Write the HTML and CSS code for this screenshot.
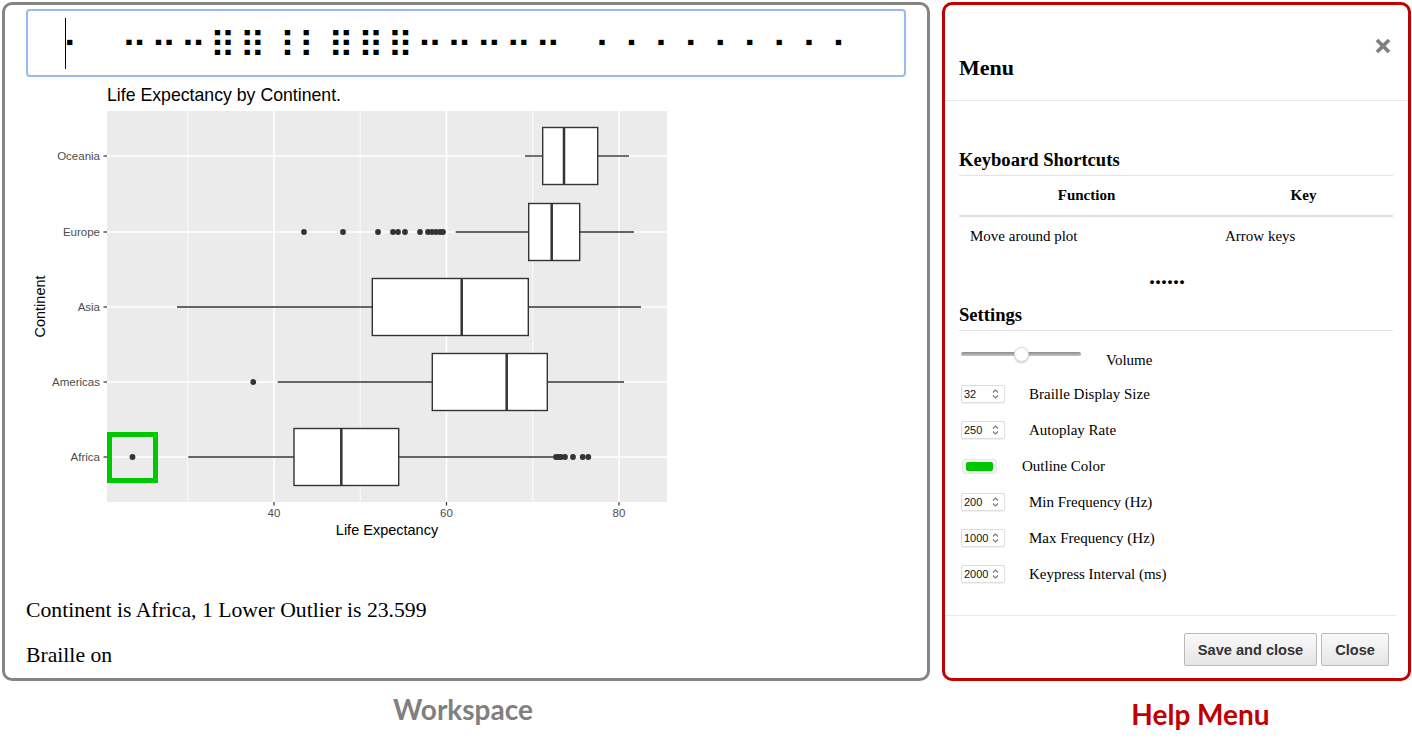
FILE: index.html
```html
<!DOCTYPE html>
<html lang="en">
<head>
    <meta charset="UTF-8">
    <meta name="viewport" content="width=device-width, initial-scale=1.0">
    <title>Workspace and Help Menu</title>

    <link rel="stylesheet" href="styles.css">
</head>
<body>
    <div class="page">
        <div class="col col-workspace">
            <div class="workspace">
                <div class="braille" aria-label="Braille display">
                    <span class="caret"></span><span class="braille-text">⠂⠀⠒⠒⠒⠿⠿⠸⠇⠿⠿⠿⠒⠒⠒⠒⠒⠀⠂⠂⠂⠂⠂⠂⠂⠂⠂</span>
                </div>

                <svg class="plot" width="660" height="470" viewBox="20 80 660 470">
                    <text class="plot-title" x="107" y="101">Life Expectancy by Continent.</text>
                    <rect x="107" y="111" width="560" height="391" fill="#ebebeb"/>

                    <!-- grid -->
                    <g class="grid-minor">
                        <line x1="187.75" y1="111" x2="187.75" y2="502"/>
                        <line x1="360.25" y1="111" x2="360.25" y2="502"/>
                        <line x1="532.75" y1="111" x2="532.75" y2="502"/>
                    </g>
                    <g class="grid-major">
                        <line x1="274" y1="111" x2="274" y2="502"/>
                        <line x1="446.5" y1="111" x2="446.5" y2="502"/>
                        <line x1="619" y1="111" x2="619" y2="502"/>
                        <line x1="107" y1="156" x2="667" y2="156"/>
                        <line x1="107" y1="232" x2="667" y2="232"/>
                        <line x1="107" y1="307" x2="667" y2="307"/>
                        <line x1="107" y1="382" x2="667" y2="382"/>
                        <line x1="107" y1="457" x2="667" y2="457"/>
                    </g>

                    <!-- Oceania -->
                    <g class="box">
                        <line x1="525" y1="156" x2="542.7" y2="156"/>
                        <line x1="597.7" y1="156" x2="629" y2="156"/>
                        <rect x="542.7" y="127.5" width="55" height="57"/>
                        <line class="median" x1="564" y1="127.5" x2="564" y2="184.5"/>
                    </g>
                    <!-- Europe -->
                    <g class="box">
                        <line x1="455.7" y1="232" x2="528.7" y2="232"/>
                        <line x1="579.7" y1="232" x2="634" y2="232"/>
                        <rect x="528.7" y="203.5" width="51" height="57"/>
                        <line class="median" x1="551.7" y1="203.5" x2="551.7" y2="260.5"/>
                    </g>
                    <g class="outliers">
                        <circle cx="304" cy="232" r="2.9"/>
                        <circle cx="343" cy="232" r="2.9"/>
                        <circle cx="378" cy="232" r="2.9"/>
                        <circle cx="393" cy="232" r="2.9"/>
                        <circle cx="398" cy="232" r="2.9"/>
                        <circle cx="405" cy="232" r="2.9"/>
                        <circle cx="420" cy="232" r="2.9"/>
                        <circle cx="428" cy="232" r="2.9"/>
                        <circle cx="432" cy="232" r="2.9"/>
                        <circle cx="436" cy="232" r="2.9"/>
                        <circle cx="440" cy="232" r="2.9"/>
                        <circle cx="443" cy="232" r="2.9"/>
                    </g>
                    <!-- Asia -->
                    <g class="box">
                        <line x1="177" y1="307" x2="372.3" y2="307"/>
                        <line x1="528.3" y1="307" x2="641" y2="307"/>
                        <rect x="372.3" y="278.5" width="156" height="57"/>
                        <line class="median" x1="461.7" y1="278.5" x2="461.7" y2="335.5"/>
                    </g>
                    <!-- Americas -->
                    <g class="box">
                        <line x1="277.7" y1="382" x2="432.3" y2="382"/>
                        <line x1="547.3" y1="382" x2="624" y2="382"/>
                        <rect x="432.3" y="353.5" width="115" height="57"/>
                        <line class="median" x1="506.7" y1="353.5" x2="506.7" y2="410.5"/>
                    </g>
                    <g class="outliers">
                        <circle cx="253.3" cy="382" r="2.9"/>
                    </g>
                    <!-- Africa -->
                    <g class="box">
                        <line x1="188.3" y1="457" x2="294" y2="457"/>
                        <line x1="398.7" y1="457" x2="553" y2="457"/>
                        <rect x="294" y="428.5" width="104.7" height="57"/>
                        <line class="median" x1="341.3" y1="428.5" x2="341.3" y2="485.5"/>
                    </g>
                    <g class="outliers">
                        <circle cx="132.5" cy="457" r="2.9"/>
                        <circle cx="556" cy="457" r="2.9"/>
                        <circle cx="558.5" cy="457" r="2.9"/>
                        <circle cx="561" cy="457" r="2.9"/>
                        <circle cx="565" cy="457" r="2.9"/>
                        <circle cx="573" cy="457" r="2.9"/>
                        <circle cx="582.7" cy="457" r="2.9"/>
                        <circle cx="588.3" cy="457" r="2.9"/>
                    </g>

                    <!-- selected point -->
                    <rect class="focus-ring" x="109.5" y="434.5" width="46" height="46"/>

                    <!-- axes -->
                    <g class="ticks">
                        <line x1="103.5" y1="156" x2="107" y2="156"/>
                        <line x1="103.5" y1="232" x2="107" y2="232"/>
                        <line x1="103.5" y1="307" x2="107" y2="307"/>
                        <line x1="103.5" y1="382" x2="107" y2="382"/>
                        <line x1="103.5" y1="457" x2="107" y2="457"/>
                        <line x1="274" y1="502" x2="274" y2="505.5"/>
                        <line x1="446.5" y1="502" x2="446.5" y2="505.5"/>
                        <line x1="619" y1="502" x2="619" y2="505.5"/>
                    </g>
                    <g class="axis-y">
                        <text x="100" y="160">Oceania</text>
                        <text x="100" y="236">Europe</text>
                        <text x="100" y="311">Asia</text>
                        <text x="100" y="386">Americas</text>
                        <text x="100" y="461">Africa</text>
                    </g>
                    <g class="axis-x">
                        <text x="274" y="517">40</text>
                        <text x="446.5" y="517">60</text>
                        <text x="619" y="517">80</text>
                    </g>
                    <text class="axis-title" x="387" y="535">Life Expectancy</text>
                    <text class="axis-title" transform="translate(45 306.5) rotate(-90)">Continent</text>
                </svg>

                <p class="status status-first">Continent is Africa, 1 Lower Outlier is 23.599</p>
                <p class="status">Braille on</p>
            </div>
            <div class="caption caption-workspace">Workspace</div>
        </div>

        <div class="col col-help">
            <div class="help">
                <div class="help-header">
                    <h2>Menu</h2>
                    <svg class="close-x" width="16" height="16" viewBox="0 0 16 16">
                        <path d="M2 2 14 14M14 2 2 14"/>
                    </svg>
                </div>

                <div class="help-body">
                    <h3 class="h-shortcuts">Keyboard Shortcuts</h3>
                    <table>
                        <thead>
                            <tr>
                                <th class="col-fn">Function</th>
                                <th>Key</th>
                            </tr>
                        </thead>
                        <tbody>
                            <tr>
                                <td>Move around plot</td>
                                <td>Arrow keys</td>
                            </tr>
                        </tbody>
                    </table>
                    <div class="more">......</div>

                    <h3 class="h-settings">Settings</h3>
                    <div class="settings">
                        <div class="row">
                            <input type="range" class="volume" min="0" max="100" value="50">
                            <span class="lbl lbl-volume">Volume</span>
                        </div>
                        <div class="row">
                            <span class="num"><span>32</span><svg class="spin" width="7" height="12" viewBox="0 0 7 12"><path d="M1 4.5 3.5 2 6 4.5M1 7.5 3.5 10 6 7.5"/></svg></span>
                            <span class="lbl">Braille Display Size</span>
                        </div>
                        <div class="row">
                            <span class="num"><span>250</span><svg class="spin" width="7" height="12" viewBox="0 0 7 12"><path d="M1 4.5 3.5 2 6 4.5M1 7.5 3.5 10 6 7.5"/></svg></span>
                            <span class="lbl">Autoplay Rate</span>
                        </div>
                        <div class="row">
                            <span class="color-pick"><span class="swatch"></span></span>
                            <span class="lbl">Outline Color</span>
                        </div>
                        <div class="row">
                            <span class="num"><span>200</span><svg class="spin" width="7" height="12" viewBox="0 0 7 12"><path d="M1 4.5 3.5 2 6 4.5M1 7.5 3.5 10 6 7.5"/></svg></span>
                            <span class="lbl">Min Frequency (Hz)</span>
                        </div>
                        <div class="row">
                            <span class="num"><span>1000</span><svg class="spin" width="7" height="12" viewBox="0 0 7 12"><path d="M1 4.5 3.5 2 6 4.5M1 7.5 3.5 10 6 7.5"/></svg></span>
                            <span class="lbl">Max Frequency (Hz)</span>
                        </div>
                        <div class="row">
                            <span class="num"><span>2000</span><svg class="spin" width="7" height="12" viewBox="0 0 7 12"><path d="M1 4.5 3.5 2 6 4.5M1 7.5 3.5 10 6 7.5"/></svg></span>
                            <span class="lbl">Keypress Interval (ms)</span>
                        </div>
                    </div>
                </div>

                <div class="help-footer">
                    <button type="button">Save and close</button>
                    <button type="button">Close</button>
                </div>
            </div>
            <div class="caption caption-help">Help Menu</div>
        </div>
    </div>
</body>
</html>
```

FILE: styles.css
```css
body {
    margin: 0;
    width: 1412px;
    height: 751px;
    overflow: hidden;
    background-color: #fff;
    font-family: "Liberation Serif", "Times New Roman", serif;
    color: #000;
}

.page {
    display: flex;
    gap: 12px;
    padding: 2px 0 0 2px;
}

.col {
    display: flex;
    flex-direction: column;
}

/* ---- workspace ---- */

.workspace {
    box-sizing: border-box;
    width: 928px;
    height: 679px;
    border: 3px solid #858585;
    border-radius: 10px;
}

.braille {
    box-sizing: border-box;
    display: flex;
    align-items: center;
    width: 880px;
    height: 68px;
    margin: 4px 0 0 21px;
    padding-left: 37px;
    border: 2px solid #98b9f2;
    border-radius: 4px;
}

.caret {
    flex-shrink: 0;
    width: 1px;
    height: 51px;
    margin-right: -4px;
    background-color: #000;
}

.braille-text {
    margin-top: 6px;
    font-family: "DejaVu Sans", sans-serif;
    font-size: 36px;
    line-height: 40px;
    letter-spacing: 3.2px;
    white-space: pre;
    -webkit-font-smoothing: antialiased;
}

.plot {
    display: block;
    margin: 3px 0 0 15px;
    font-family: "Liberation Sans", Arial, sans-serif;
}

.plot-title {
    font-size: 17.7px;
    fill: #000;
}

.grid-minor line {
    stroke: #fff;
    stroke-width: 0.8;
}

.grid-major line {
    stroke: #fff;
    stroke-width: 1.6;
}

.box line,
.box rect {
    stroke: #333;
    stroke-width: 1.4;
}

.box rect {
    fill: #fff;
}

.box .median {
    stroke-width: 2.5;
}

.outliers circle {
    fill: #333;
}

.focus-ring {
    fill: none;
    stroke: #00c800;
    stroke-width: 5;
}

.ticks line {
    stroke: #333;
    stroke-width: 1.2;
}

.axis-y text {
    font-size: 11.5px;
    fill: #4d4d4d;
    text-anchor: end;
}

.axis-x text {
    font-size: 11.5px;
    fill: #4d4d4d;
    text-anchor: middle;
}

.axis-title {
    font-size: 14.5px;
    fill: #000;
    text-anchor: middle;
}

.status {
    margin: 21px 0 0 21px;
    font-size: 21.7px;
    line-height: 24px;
}

.status-first {
    margin-top: 48px;
}

/* ---- captions ---- */

.caption {
    font-family: Lato, "Open Sans", sans-serif;
    font-weight: 700;
    font-size: 28px;
    line-height: 34px;
    text-align: center;
}

.caption-workspace {
    margin-top: 11px;
    padding-right: 6px;
    color: #808080;
}

.caption-help {
    margin-top: 16px;
    padding-left: 48px;
    color: #c00000;
}

/* ---- help menu ---- */

.help {
    box-sizing: border-box;
    display: flex;
    flex-direction: column;
    width: 469px;
    height: 679px;
    border: 3px solid #c00000;
    border-radius: 10px;
    font-size: 15px;
}

.help-header {
    box-sizing: border-box;
    display: flex;
    justify-content: space-between;
    align-items: flex-start;
    height: 96px;
    padding: 0 17px 0 14px;
    border-bottom: 1px solid #e9e9e9;
}

.help-header h2 {
    margin: 0;
    padding-top: 50px;
    font-size: 22px;
    line-height: 26px;
}

.close-x {
    margin-top: 33px;
}

.close-x path {
    stroke: #7f7f7f;
    stroke-width: 3.8;
    fill: none;
}

.help-body {
    flex: 1;
    padding: 0 15px 0 14px;
}

h3 {
    margin: 0;
    padding-bottom: 4px;
    font-size: 18.6px;
    line-height: 22px;
    border-bottom: 1px solid #e3e3e3;
}

.h-shortcuts {
    margin-top: 48px;
}

table {
    width: 100%;
    border-collapse: collapse;
    line-height: 17px;
}

th {
    padding: 11px;
    border-bottom: 2px solid #dee2e6;
}

td {
    padding: 11px;
    text-align: left;
}

.col-fn {
    width: 233px;
}

.more {
    margin-top: 8px;
    padding-right: 18px;
    text-align: center;
    font-weight: 700;
    font-size: 24px;
    line-height: 24px;
}

.h-settings {
    margin-top: 16px;
}

.settings {
    margin-top: 9px;
}

.row {
    display: flex;
    align-items: center;
    height: 36px;
    line-height: 18px;
}

.volume {
    -webkit-appearance: none;
    appearance: none;
    width: 120px;
    height: 16px;
    margin: 0 25px 8px 2px;
    background: transparent;
}

.volume::-webkit-slider-runnable-track {
    height: 4px;
    border-radius: 2px;
    background: linear-gradient(#8c8c8c, #c4c4c4);
}

.volume::-webkit-slider-thumb {
    -webkit-appearance: none;
    width: 15px;
    height: 15px;
    margin-top: -5.5px;
    border: 1px solid #d4d4d4;
    border-radius: 50%;
    background-color: #fff;
    box-shadow: 0 1px 2px rgba(0, 0, 0, 0.2);
}

.lbl-volume {
    padding-top: 4px;
}

.num {
    box-sizing: border-box;
    display: inline-flex;
    align-items: center;
    justify-content: space-between;
    width: 44px;
    height: 18px;
    margin: 0 24px 0 2px;
    padding: 0 5px 0 2px;
    border: 1px solid #dddddd;
    border-radius: 2px;
    box-shadow: 0 1px 1px rgba(0, 0, 0, 0.06);
    font-family: "Liberation Sans", Arial, sans-serif;
    font-size: 11px;
    color: #111;
}

.spin path {
    fill: none;
    stroke: #777;
    stroke-width: 1.1;
}

.color-pick {
    box-sizing: border-box;
    display: inline-flex;
    width: 35px;
    height: 15px;
    margin: 0 25px 0 3px;
    padding: 2px 3px;
    border: 1px solid #e6e6e6;
    border-radius: 3px;
    background-color: #f3f3f3;
}

.swatch {
    flex: 1;
    border-radius: 2px;
    background-color: #00c800;
}

.help-footer {
    display: flex;
    justify-content: flex-end;
    gap: 4px;
    margin-right: 12px;
    padding: 17px 7px 12px 0;
    border-top: 1px solid #e9e9e9;
}

.help-footer button {
    height: 33px;
    padding: 0 13px;
    border: 1px solid #bababa;
    border-radius: 2px;
    background: linear-gradient(#fafafa, #e5e5e5);
    font-family: "Liberation Sans", Arial, sans-serif;
    font-size: 14.6px;
    font-weight: 700;
    color: #333;
}
```
